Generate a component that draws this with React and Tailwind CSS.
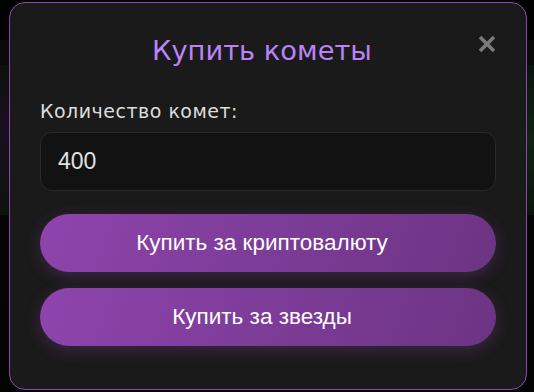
import { useState } from "react";

function CloseIcon() {
  return (
    <svg width="20" height="20" viewBox="0 0 20 20" className="block">
      <path d="M3 3 L17 17 M17 3 L3 17" stroke="#7a7a7a" strokeWidth="3.6" strokeLinecap="butt" />
    </svg>
  );
}

function BuyButton({ children }) {
  return (
    <button
      type="button"
      className="flex h-[58px] w-full items-center justify-center rounded-full bg-[linear-gradient(110deg,#8e44ad,#6c3483)] pr-[12px] text-[22.5px] text-white shadow-[0_4px_16px_rgba(142,68,173,0.3)]"
      style={{ fontFamily: '"Liberation Sans", Arial, sans-serif' }}
    >
      {children}
    </button>
  );
}

export default function App() {
  const [amount, setAmount] = useState("400");

  return (
    <div className="relative h-[392px] w-[534px] overflow-hidden bg-[#030303]">
      {/* dimmed page behind the overlay */}
      <div className="flex h-full flex-col">
        <div className="h-[40px] bg-[#020202]" />
        <div className="h-[25px] bg-[#0a0a0a]" />
        <div className="flex h-[150px] justify-between">
          <div className="w-[10px] bg-[linear-gradient(180deg,#0b1208,#1a0f22_40%,#0c140a)]" />
          <div className="w-[10px] bg-[linear-gradient(180deg,#0a1410,#0f2410_50%,#0b130c)]" />
        </div>
        <div className="h-[90px] bg-[#050505]" />
        <div className="flex-1 bg-[#040404]" />
      </div>

      <div className="absolute inset-0 flex items-center pl-[9px]">
        <div className="relative h-[388px] w-[518px] rounded-[16px] border border-[#8e44ad] bg-[#1a1a1a] px-[30px] pt-[31px]">
          <button type="button" className="absolute right-[29px] top-[31px]">
            <CloseIcon />
          </button>

          <h2
            className="pr-[12px] text-center text-[27.3px] leading-[34px] text-[#bd82f5]"
            style={{ fontFamily: '"DejaVu Sans", "Open Sans", sans-serif' }}
          >
            Купить кометы
          </h2>

          <label
            className="mt-[31px] block text-[19px] leading-[24px] tracking-[0.5px] text-[#dddddd]"
            style={{ fontFamily: '"DejaVu Sans", "Open Sans", sans-serif' }}
          >
            Количество комет:
          </label>

          <input
            value={amount}
            onChange={(e) => setAmount(e.target.value)}
            className="mt-[9px] h-[59px] w-full rounded-[12px] border border-[#2a2a2a] bg-[#121212] px-[17px] text-[23px] text-[#e0e0e0] outline-none"
            style={{ fontFamily: '"Liberation Sans", Arial, sans-serif' }}
          />

          <div className="mt-[23px] flex flex-col gap-[16px]">
            <BuyButton>Купить за криптовалюту</BuyButton>
            <BuyButton>Купить за звезды</BuyButton>
          </div>
        </div>
      </div>
    </div>
  );
}
